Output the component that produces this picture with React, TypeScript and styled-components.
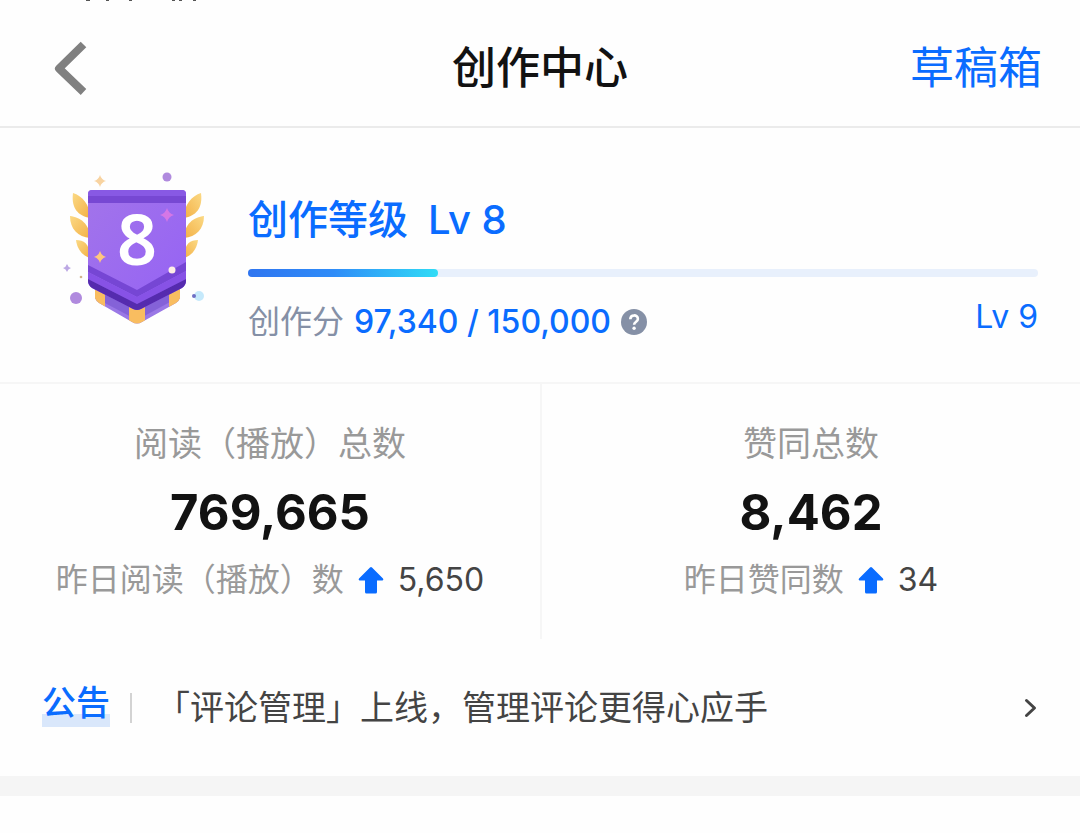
import React, { useId } from 'react';
import styled, { createGlobalStyle } from 'styled-components';

const GlobalStyle = createGlobalStyle`
  *, *::before, *::after { box-sizing: border-box; }
  body {
    margin: 0;
    background: #fefefe;
    color: #121212;
    font-family: Inter, "Noto Sans CJK SC", sans-serif;
  }
  h1, h2, p { margin: 0; font: inherit; }
  button { margin: 0; padding: 0; border: 0; background: none; font: inherit; color: inherit; cursor: pointer; }
  a { color: inherit; text-decoration: none; }
  svg { display: block; flex: none; }
`;

const Page = styled.div`
  width: 100%;
`;

const ScrolledText = styled.svg`
  height: 2px;
  width: 140px;
  margin-left: 76px;
`;

const TopBar = styled.header`
  display: grid;
  grid-template-columns: 1fr auto 1fr;
  align-items: center;
  height: 126px;
  padding: 8px 38px 0;
  border-bottom: 2px solid #ebebeb;
`;

const BackButton = styled.button`
  justify-self: start;
  margin-left: 16px;
`;

const Title = styled.h1`
  font-size: 44px;
  line-height: 64px;
  font-weight: 500;
`;

const DraftsLink = styled.a`
  justify-self: end;
  font-size: 44px;
  line-height: 64px;
  color: #0a6cff;
`;

const LevelPanel = styled.section`
  display: flex;
  height: 256px;
  padding: 32px 42px 0 50px;
  border-bottom: 2px solid #f6f6f6;
`;

const LevelBody = styled.div`
  flex: 1;
  min-width: 0;
  margin-left: 28px;
  padding-top: 32px;
`;

const LevelTitle = styled.h2`
  display: flex;
  gap: 20px;
  font-size: 40px;
  line-height: 56px;
  font-weight: 500;
  color: #0a6cff;
`;

const Track = styled.div`
  height: 8px;
  margin-top: 21px;
  border-radius: 4px;
  background: #e8f0fc;
`;

const Fill = styled.div`
  height: 100%;
  border-radius: 4px;
  background: linear-gradient(90deg, #2f75f0, #2f8cf8 45%, #30dcf6);
`;

const ScoreRow = styled.div`
  display: flex;
  align-items: center;
  margin-top: 16px;
  font-size: 32px;
  line-height: 48px;
  color: #0a6cff;
`;

const ScoreLabel = styled.span`
  margin-right: 10px;
  color: #8590a6;
`;

const Score = styled.span`
  font-weight: 500;
`;

const HelpButton = styled.button`
  margin-left: 10px;
`;

const NextLevel = styled.span`
  margin-left: auto;
  padding-bottom: 10px;
`;

const Stats = styled.section`
  display: grid;
  grid-template-columns: 1fr 1fr;
`;

const Stat = styled.div`
  display: flex;
  flex-direction: column;
  align-items: center;
  height: 255px;
  padding-top: 36px;
  & + & { border-left: 2px solid #f6f6f6; }
`;

const StatLabel = styled.p`
  font-size: 34px;
  line-height: 48px;
  color: #999;
`;

const StatValue = styled.p`
  margin-top: 13px;
  font-size: 49px;
  line-height: 64px;
  font-weight: 700;
`;

const StatDelta = styled.p`
  display: flex;
  align-items: center;
  margin-top: 11px;
  font-size: 32px;
  line-height: 48px;
  color: #999;
  svg { margin: 0 14px; }
`;

const DeltaValue = styled.span`
  color: #444;
`;

const Notice = styled.a`
  display: flex;
  align-items: center;
  height: 137px;
  padding: 0 42px;
  font-size: 34px;
  line-height: 48px;
  color: #444;
`;

const NoticeTag = styled.span`
  margin-bottom: 10px;
  font-weight: 500;
  color: #0a6cff;
  background: linear-gradient(#d9e7fb, #d9e7fb) 0 100% / 100% 13px no-repeat;
`;

const NoticeRule = styled.span`
  width: 2px;
  height: 30px;
  margin: 0 24px 0 20px;
  background: #d3d3d3;
`;

const NoticeText = styled.span`
  flex: 1;
`;

const SectionGap = styled.div`
  height: 20px;
  background: #f5f5f5;
`;

function Sparkle({ x, y, r, fill }: { x: number; y: number; r: number; fill: string }) {
  const k = r * 0.22;
  return (
    <path
      fill={fill}
      d={`M${x} ${y - r}Q${x + k} ${y - k} ${x + r} ${y}Q${x + k} ${y + k} ${x} ${y + r}Q${x - k} ${y + k} ${x - r} ${y}Q${x - k} ${y - k} ${x} ${y - r}Z`}
    />
  );
}

function LevelBadge({ level }: { level: number }) {
  const id = useId();
  const leaf = `url(#${id}leaf)`;
  const wing = (
    <g fill={leaf}>
      <path d="M23 33C32 36 40 44 40 58C28 56 21 48 23 33Z" />
      <path d="M20 56C30 57 40 64 40 78C28 77 20 69 20 56Z" />
      <path d="M26 80C34 80 40 84 40 98C31 95 27 88 26 80Z" />
    </g>
  );
  return (
    <svg width="170" height="175" viewBox="0 0 170 175" role="img" aria-label={`Lv ${level}`}>
      <defs>
        <linearGradient id={`${id}leaf`} x1="0" y1="0" x2="1" y2="1">
          <stop offset="0" stopColor="#fbd984" />
          <stop offset="1" stopColor="#f3b046" />
        </linearGradient>
        <linearGradient id={`${id}body`} x1="0" y1="0" x2="1" y2="1">
          <stop offset="0" stopColor="#a274ea" />
          <stop offset="1" stopColor="#9562f5" />
        </linearGradient>
        <clipPath id={`${id}shield`}>
          <path d="M42 30H132Q136 30 136 34V121Q136 125 132 128L91 149Q87 151 83 149L42 128Q38 125 38 121V34Q38 30 42 30Z" />
        </clipPath>
        <clipPath id={`${id}ribbon`}>
          <path d="M45 124H130V138Q129 141 126 143L92 162Q87 165 82 162L49 143Q46 141 45 138Z" />
        </clipPath>
      </defs>
      {wing}
      <g transform="matrix(-1 0 0 1 174 0)">{wing}</g>
      <g clipPath={`url(#${id}ribbon)`}>
        <path fill="#9a78e6" d="M45 120H130V170H45Z" />
        <path fill="#7654cf" d="M53 120H120V142L87 160L53 142Z" opacity=".6" />
        <path fill="#f9bd60" d="M45 120H55V150H45ZM119 120H130V150H119ZM79 140H95V170H79Z" />
      </g>
      <g clipPath={`url(#${id}shield)`}>
        <path fill={`url(#${id}body)`} d="M38 30H136V151H38Z" />
        <path fill="#8859e4" d="M38 30H136V36H38Z" />
        <path fill="#7748d3" d="M38 36H136V43H38Z" />
        <path fill="#7646d4" d="M38 105L87 130L136 102V111L87 137L38 112Z" />
        <path fill="#8752e6" d="M38 112L87 137L136 111V119L87 144L38 119Z" />
        <path fill="#552bae" d="M38 119L87 144L136 119V155H38Z" />
      </g>
      <text x="87" y="105" textAnchor="middle" fontFamily='"Noto Sans", sans-serif' fontWeight="600" fontSize="70" fill="#fff">
        {level}
      </text>
      <Sparkle x={117} y={55} r={7} fill="#d577e6" />
      <Sparkle x={50} y={97} r={6} fill="#ffc67e" />
      <Sparkle x={50} y={21} r={6} fill="#f8d3a0" />
      <Sparkle x={17} y={108} r={4} fill="#bca8e4" />
      <circle cx="117" cy="17" r="4.5" fill="#b08ade" />
      <circle cx="122" cy="110" r="3.5" fill="#fdeee6" />
      <circle cx="26" cy="138" r="6" fill="#b08ade" />
      <circle cx="31" cy="117" r="1.3" fill="#d3b58c" />
      <circle cx="149" cy="136" r="5" fill="#c5e9fb" />
      <circle cx="144" cy="136" r="2" fill="#6e6fc4" />
    </svg>
  );
}

function UpArrow() {
  return (
    <svg width="26" height="28" viewBox="0 0 26 28" aria-hidden="true">
      <path fill="#0a6cff" d="M12 1.400Q13 .6 14 1.400L25 12.500Q26 14 24.500 14.500H19V26Q19 27.500 17.500 27.500H8.500Q7 27.500 7 26V14.500H1.500Q0 14 1 12.500Z" />
    </svg>
  );
}

function StatCard({ label, value, deltaLabel, delta }: { label: string; value: string; deltaLabel: string; delta: string }) {
  return (
    <Stat>
      <StatLabel>{label}</StatLabel>
      <StatValue>{value}</StatValue>
      <StatDelta>
        {deltaLabel}
        <UpArrow />
        <DeltaValue>{delta}</DeltaValue>
      </StatDelta>
    </Stat>
  );
}

export default function App() {
  return (
    <Page>
      <GlobalStyle />
      <ScrolledText viewBox="0 0 140 2" aria-hidden="true">
        <path fill="#555" d="M10 0h4v1h-4zM30 0h3v1h-3zM53 0h3v1h-3zM96 0h3v1h-3zM103 0h3v1h-3zM117 0h3v1h-3z" />
      </ScrolledText>
      <TopBar>
        <BackButton type="button" aria-label="返回">
          <svg width="34" height="54" viewBox="0 0 34 54" fill="none" stroke="#808080" strokeWidth="8" strokeLinejoin="round">
            <path d="M29.500 3.500L5 27.500L29.500 51" />
          </svg>
        </BackButton>
        <Title>创作中心</Title>
        <DraftsLink href="#drafts">草稿箱</DraftsLink>
      </TopBar>
      <main>
        <LevelPanel>
          <LevelBadge level={8} />
          <LevelBody>
            <LevelTitle>
              <span>创作等级</span>
              <span>Lv 8</span>
            </LevelTitle>
            <Track role="progressbar" aria-label="创作分" aria-valuenow={24} aria-valuemin={0} aria-valuemax={100}>
              <Fill style={{ width: '24%' }} />
            </Track>
            <ScoreRow>
              <ScoreLabel>创作分</ScoreLabel>
              <Score>97,340 / 150,000</Score>
              <HelpButton type="button" aria-label="创作分说明">
                <svg width="26" height="26" viewBox="0 0 26 26" fill="none">
                  <circle cx="13" cy="13" r="13" fill="#8590a6" />
                  <path d="M9.300 10.200C9.300 5.200 16.900 5.200 16.900 10C16.900 12.700 13.100 12.800 13.100 15.800" stroke="#fff" strokeWidth="2.600" />
                  <circle cx="13.100" cy="19.300" r="1.700" fill="#fff" />
                </svg>
              </HelpButton>
              <NextLevel>Lv 9</NextLevel>
            </ScoreRow>
          </LevelBody>
        </LevelPanel>
        <Stats>
          <StatCard label="阅读（播放）总数" value="769,665" deltaLabel="昨日阅读（播放）数" delta="5,650" />
          <StatCard label="赞同总数" value="8,462" deltaLabel="昨日赞同数" delta="34" />
        </Stats>
        <Notice href="#notice">
          <NoticeTag>公告</NoticeTag>
          <NoticeRule />
          <NoticeText>「评论管理」上线，管理评论更得心应手</NoticeText>
          <svg width="14" height="20" viewBox="0 0 14 20" fill="none" stroke="#444" strokeWidth="3" strokeLinecap="round" strokeLinejoin="round" aria-hidden="true">
            <path d="M2.500 2.500L10.500 10L2.500 17.500" />
          </svg>
        </Notice>
        <SectionGap />
      </main>
    </Page>
  );
}
